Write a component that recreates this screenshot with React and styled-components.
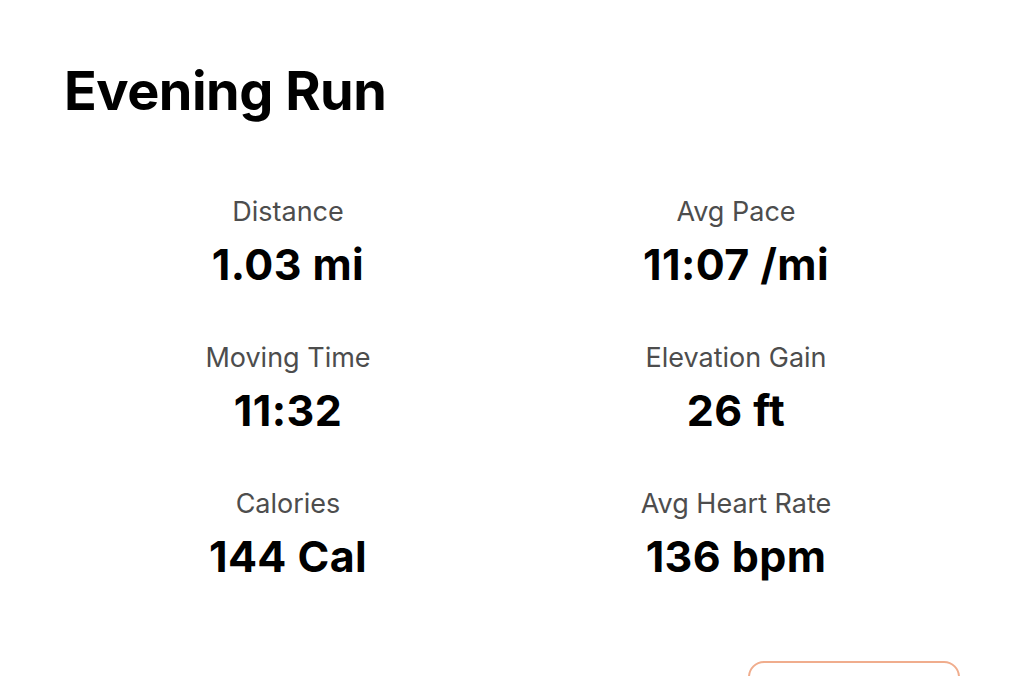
import React from "react";
import styled, { createGlobalStyle } from "styled-components";

const Global = createGlobalStyle`
  html, body { margin: 0; padding: 0; background: #fff; }
  body { font-family: Inter, "Noto Sans", sans-serif; color: #000; }
`;

const Page = styled.main`
  padding: 58px 64px 0;
  box-sizing: border-box;
  width: 1024px;
  height: 676px;
  overflow: hidden;
`;

const Title = styled.h1`
  margin: 0;
  font-size: 54px;
  line-height: 65px;
  font-weight: 700;
  letter-spacing: -0.5px;
`;

const Stats = styled.div`
  display: grid;
  grid-template-columns: 1fr 1fr;
  row-gap: 51px;
  margin-top: 71px;
`;

const Stat = styled.div`
  display: flex;
  flex-direction: column;
  align-items: center;
  gap: 10px;
`;

const Label = styled.span`
  font-size: 27px;
  line-height: 35px;
  color: #4d4d4d;
  font-weight: 400;
`;

const Value = styled.span`
  font-size: 43px;
  line-height: 50px;
  font-weight: 700;
  letter-spacing: 0.4px;
`;

const Actions = styled.div`
  display: flex;
  justify-content: flex-end;
  margin-top: 80px;
`;

const Button = styled.button`
  width: 212px;
  height: 56px;
  border: 2px solid #f0ad8d;
  border-radius: 16px;
  background: #fff;
  font-family: inherit;
`;

const stats = [
  ["Distance", "1.03 mi"],
  ["Avg Pace", "11:07 /mi"],
  ["Moving Time", "11:32"],
  ["Elevation Gain", "26 ft"],
  ["Calories", "144 Cal"],
  ["Avg Heart Rate", "136 bpm"],
];

export default function App() {
  return (
    <>
      <Global />
      <Page>
        <Title>Evening Run</Title>
        <Stats>
          {stats.map(([l, v]) => (
            <Stat key={l}>
              <Label>{l}</Label>
              <Value>{v}</Value>
            </Stat>
          ))}
        </Stats>
        <Actions>
          <Button aria-label="More" />
        </Actions>
      </Page>
    </>
  );
}
